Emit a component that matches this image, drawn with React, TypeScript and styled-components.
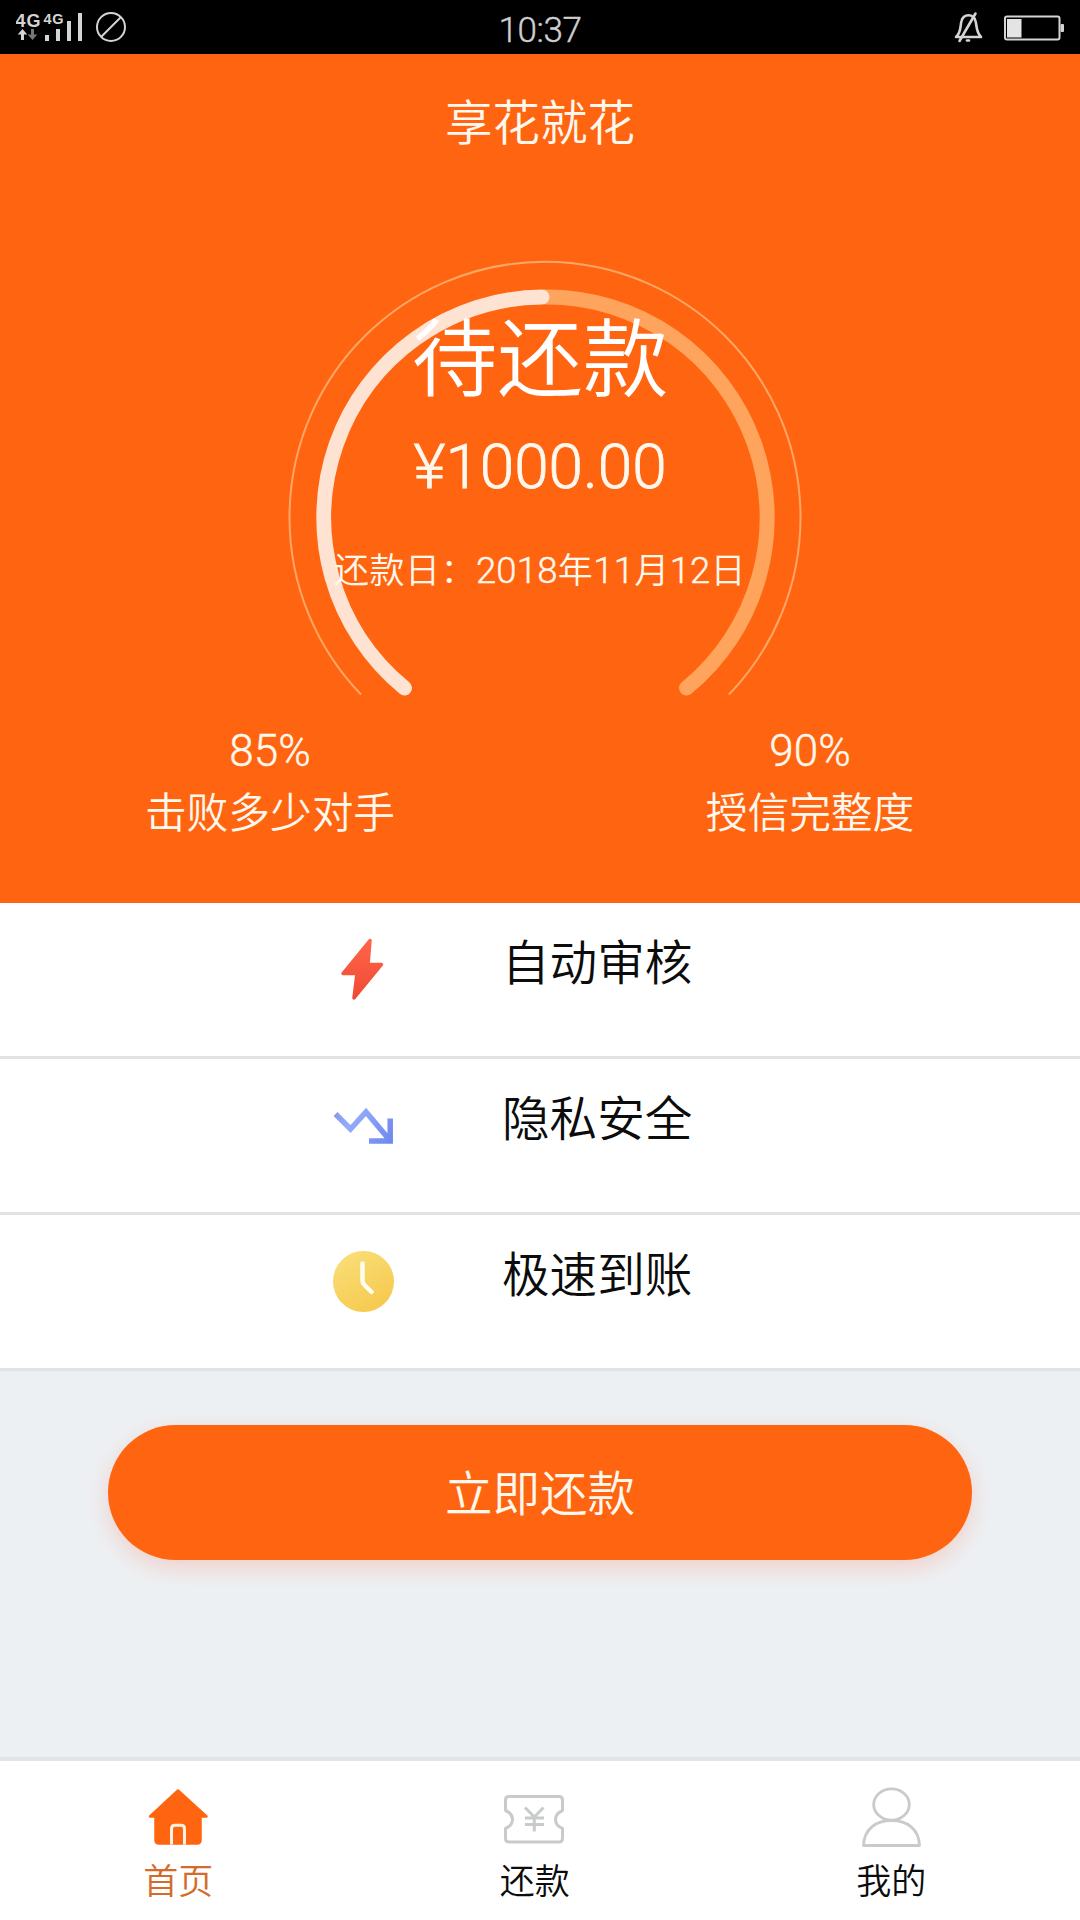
import React from "react";
import styled, { createGlobalStyle } from "styled-components";

const ORANGE = "#ff6510";

const GlobalStyle = createGlobalStyle`
  *, *::before, *::after { box-sizing: border-box; }
  body {
    margin: 0;
    background: #edf0f3;
    font-family: "Noto Sans CJK SC", "Noto Sans", sans-serif;
    font-weight: 350;
  }
  svg { display: block; }
`;

const Screen = styled.div`
  width: 1080px;
  height: 1920px;
  display: flex;
  flex-direction: column;
  overflow: hidden;
  background: #edf0f3;
`;

const StatusBar = styled.header`
  flex: none;
  height: 54px;
  background: #000;
  color: #cfcfcf;
  display: grid;
  grid-template-columns: 1fr auto 1fr;
  align-items: center;
  padding: 0 16px;
`;

const Digits = styled.span`
  font-family: Roboto, "Noto Sans", sans-serif;
  font-weight: 300;
  -webkit-text-stroke: 0.4px currentColor;
`;

const Clock = styled(Digits)`
  font-size: 35px;
  line-height: 62px;
  height: 54px;
  letter-spacing: -0.4px;
`;

const StatusRight = styled.div`
  display: flex;
  justify-content: flex-end;
  gap: 21px;
`;

const Hero = styled.section`
  flex: none;
  height: 849px;
  background: ${ORANGE};
  color: #fff8ee;
  display: flex;
  flex-direction: column;
`;

const Title = styled.h1`
  margin: 0;
  height: 136px;
  text-align: center;
  font-size: 47.5px;
  font-weight: inherit;
  line-height: 131px;
`;

const GaugeArea = styled.div`
  display: grid;
  height: 524px;
  > * { grid-area: 1 / 1; }
`;

const GaugeText = styled.div`
  display: flex;
  flex-direction: column;
  align-items: center;
  padding-top: 108px;
  z-index: 1;
`;

const DueLabel = styled.div`
  font-size: 85.5px;
  line-height: 110px;
  color: #fff;
`;

const Amount = styled(Digits)`
  margin-top: 19px;
  font-size: 62px;
  line-height: 80px;
  -webkit-text-stroke-width: 0.8px;
`;

const DueDate = styled.div`
  margin-top: 37px;
  font-size: 35px;
  line-height: 48px;
  letter-spacing: 0.5px;
  white-space: nowrap;
  ${Digits} {
    font-size: 36.5px;
    letter-spacing: 0.2px;
  }
`;

const Stats = styled.div`
  display: grid;
  grid-template-columns: 1fr 1fr;
  padding-top: 8px;
`;

const Stat = styled.div`
  display: flex;
  flex-direction: column;
  align-items: center;
  font-size: 41.7px;
  line-height: 58px;
`;

const StatValue = styled(Digits)`
  font-size: 44px;
  line-height: 59px;
`;

const Features = styled.ul`
  flex: none;
  margin: 0;
  padding: 0;
  list-style: none;
  background: #fff;
`;

const Feature = styled.li`
  display: grid;
  grid-template-columns: 60px 1fr;
  column-gap: 109px;
  height: 156px;
  padding: 28px 0 0 333px;
  border-bottom: 3px solid #e1e2e3;
`;

const FeatureIcon = styled.span`
  padding-top: 4px;
`;

const FeatureName = styled.span`
  font-size: 47.6px;
  line-height: 58px;
  color: #0c0c0c;
`;

const Action = styled.div`
  flex: 1;
  padding: 54px 108px 0;
`;

const PayButton = styled.button`
  display: block;
  width: 100%;
  height: 135px;
  border: 0;
  padding: 0 0 4px;
  border-radius: 68px;
  background: ${ORANGE};
  color: #fff8ee;
  font: inherit;
  font-size: 47.5px;
  box-shadow: 0 8px 22px rgba(255, 102, 60, 0.22);
`;

const TabBar = styled.nav`
  flex: none;
  height: 163px;
  display: grid;
  grid-template-columns: repeat(3, 356.5px);
  background: #fff;
  border-top: 4px solid #e1e3e5;
`;

const Tab = styled.a<{ $active?: boolean }>`
  display: flex;
  flex-direction: column;
  align-items: center;
  padding-top: 23px;
  font-size: 35px;
  line-height: 44px;
  color: ${(p) => (p.$active ? "#d56a2a" : "#0c0c0c")};
  gap: 9px;
`;

const SignalIcons = () => (
  <svg width="120" height="54" viewBox="16 0 120 54" fill="#d4d4d4">
    <g fontFamily="Liberation Sans, sans-serif" fontWeight="700">
      <text x="15.500" y="27" fontSize="18" textLength="25">4G</text>
      <text x="43.500" y="24" fontSize="14.500" textLength="20">4G</text>
    </g>
    <path d="M22.500 29l4.800 5.500h-3.300V40h-3v-5.500h-3.300z" />
    <path d="M32.500 40l-4.800-5.500h3.300V29h3v5.500h3.300z" fill="#777" />
    <path d="M45 35h4v6h-4zM56 29h4v12h-4zM67 21h4v20h-4zM78 13h4v28h-4z" />
    <g fill="none" stroke="#d4d4d4" strokeWidth="2">
      <circle cx="111" cy="27" r="14" />
      <path d="M101 37L121 17" />
    </g>
  </svg>
);

const MutedBell = () => (
  <svg width="29" height="54" viewBox="954 0 29 54" fill="none" stroke="#d4d4d4" strokeWidth="2.600" strokeLinecap="round" strokeLinejoin="round">
    <path d="M956 37C961.500 32 960 26 961.500 21C962.500 17 965 15.200 968.500 15.200C972 15.200 974.500 17 975.500 21C977 26 976 32 981 37Z" />
    <path d="M959.500 41L975.500 13.500" />
    <path d="M967 40.500h2" />
  </svg>
);

const Battery = () => (
  <svg width="60" height="54" viewBox="1004 0 60 54">
    <rect x="1005" y="16.500" width="54.500" height="23" rx="2" fill="none" stroke="#d4d4d4" strokeWidth="2" />
    <rect x="1007" y="19" width="14.500" height="18.500" fill="#e4e4e4" />
    <rect x="1060.500" y="24" width="3.500" height="8" rx="1" fill="#d4d4d4" />
  </svg>
);

const Gauge = () => (
  <svg width="1080" height="524" viewBox="0 190 1080 524" fill="none" strokeLinecap="round">
    <path d="M360.500 694A255.500 255.500 0 1 1 729.500 694" stroke="#ffa766" strokeWidth="2" />
    <path d="M545.500 297A220.500 220.500 0 0 1 686.500 688" stroke="#ffa45c" strokeWidth="15" />
    <path d="M404.500 688A220.500 220.500 0 0 1 542 297" stroke="#ffe3d2" strokeWidth="15" />
  </svg>
);

const BoltIcon = () => (
  <svg width="60" height="66" viewBox="333 935 60 66">
    <defs>
      <linearGradient id="bolt" x1="0" y1="0" x2="0" y2="1">
        <stop offset="0" stopColor="#ff6548" />
        <stop offset="1" stopColor="#f04a35" />
      </linearGradient>
    </defs>
    <path d="M370 940.500L343 973.500H357L354 998L381.500 964.500H368Z" fill="url(#bolt)" stroke="url(#bolt)" strokeWidth="3.500" strokeLinejoin="round" />
  </svg>
);

const TrendIcon = () => (
  <svg width="60" height="66" viewBox="333 1091 60 66">
    <defs>
      <linearGradient id="trend" gradientUnits="userSpaceOnUse" x1="334" y1="1108" x2="393" y2="1144">
        <stop offset="0" stopColor="#8395ea" />
        <stop offset="0.300" stopColor="#95acfa" />
        <stop offset="1" stopColor="#6c86ee" />
      </linearGradient>
    </defs>
    <path d="M335.500 1114L350.500 1129L366 1112L390 1140.500M390.200 1118.500V1141H369" fill="none" stroke="url(#trend)" strokeWidth="5.500" />
  </svg>
);

const ClockIcon = () => (
  <svg width="62" height="66" viewBox="333 1247 62 66">
    <defs>
      <linearGradient id="clock" x1="0.200" y1="0" x2="0.800" y2="1">
        <stop offset="0" stopColor="#f9de78" />
        <stop offset="1" stopColor="#f6c84c" />
      </linearGradient>
    </defs>
    <circle cx="363.500" cy="1281.500" r="30.500" fill="url(#clock)" />
    <path d="M362.500 1263.500V1280.500Q362.500 1283 364.500 1285L371.500 1292" fill="none" stroke="#fffdf0" strokeWidth="4.500" strokeLinecap="round" />
  </svg>
);

const HomeIcon = () => (
  <svg width="64" height="64" viewBox="146 1784 64 64">
    <path d="M178 1790.500L150 1816.500H155.500V1840Q155.500 1843.500 159 1843.500H197Q200.500 1843.500 200.500 1840V1816.500H206.500Z" fill={ORANGE} stroke={ORANGE} strokeWidth="2.500" strokeLinejoin="round" />
    <path d="M171.500 1844.500V1829Q171.500 1825.200 175 1825.200H181Q184.500 1825.200 184.500 1829V1844.500" fill="none" stroke="#fff4e4" strokeWidth="3" />
  </svg>
);

const TicketIcon = () => (
  <svg width="64" height="64" viewBox="503 1784 64 64" fill="none" stroke="#c9cbcb" strokeWidth="3" strokeLinejoin="round">
    <path d="M509 1796.500H559Q562.500 1796.500 562.500 1800V1810.500Q555.500 1813.500 555.500 1819.500Q555.500 1825.500 562.500 1828.500V1838.500Q562.500 1842 559 1842H509Q505.500 1842 505.500 1838.500V1828.500Q512.500 1825.500 512.500 1819.500Q512.500 1813.500 505.500 1810.500V1800Q505.500 1796.500 509 1796.500Z" />
    <path d="M525 1807.500L534.300 1817L543.500 1807.500M534.300 1817V1831.500M525 1818H544M525 1824.500H544" />
  </svg>
);

const PersonIcon = () => (
  <svg width="64" height="64" viewBox="859 1784 64 64" fill="none" stroke="#c9cbcb" strokeWidth="2.800" strokeLinejoin="round">
    <ellipse cx="891.500" cy="1804.500" rx="17.800" ry="15.600" />
    <path d="M863.500 1845.500C864 1829 876 1820.500 891.500 1820.500C907 1820.500 919 1829 919.500 1845.500Z" />
  </svg>
);

const features = [
  { name: "自动审核", icon: <BoltIcon /> },
  { name: "隐私安全", icon: <TrendIcon /> },
  { name: "极速到账", icon: <ClockIcon /> },
];

const stats = [
  { value: "85%", label: "击败多少对手" },
  { value: "90%", label: "授信完整度" },
];

const tabs = [
  { label: "首页", icon: <HomeIcon />, active: true },
  { label: "还款", icon: <TicketIcon />, active: false },
  { label: "我的", icon: <PersonIcon />, active: false },
];

export default function App() {
  return (
    <>
      <GlobalStyle />
      <Screen>
        <StatusBar>
          <SignalIcons />
          <Clock>10:37</Clock>
          <StatusRight>
            <MutedBell />
            <Battery />
          </StatusRight>
        </StatusBar>
        <Hero>
          <Title>享花就花</Title>
          <GaugeArea>
            <Gauge />
            <GaugeText>
              <DueLabel>待还款</DueLabel>
              <Amount>¥1000.00</Amount>
              <DueDate>
                还款日：<Digits>2018</Digits>年<Digits>11</Digits>月<Digits>12</Digits>日
              </DueDate>
            </GaugeText>
          </GaugeArea>
          <Stats>
            {stats.map((s) => (
              <Stat key={s.label}>
                <StatValue>{s.value}</StatValue>
                <span>{s.label}</span>
              </Stat>
            ))}
          </Stats>
        </Hero>
        <Features>
          {features.map((f) => (
            <Feature key={f.name}>
              <FeatureIcon>{f.icon}</FeatureIcon>
              <FeatureName>{f.name}</FeatureName>
            </Feature>
          ))}
        </Features>
        <Action>
          <PayButton>立即还款</PayButton>
        </Action>
        <TabBar>
          {tabs.map((t) => (
            <Tab key={t.label} $active={t.active}>
              {t.icon}
              <span>{t.label}</span>
            </Tab>
          ))}
        </TabBar>
      </Screen>
    </>
  );
}
